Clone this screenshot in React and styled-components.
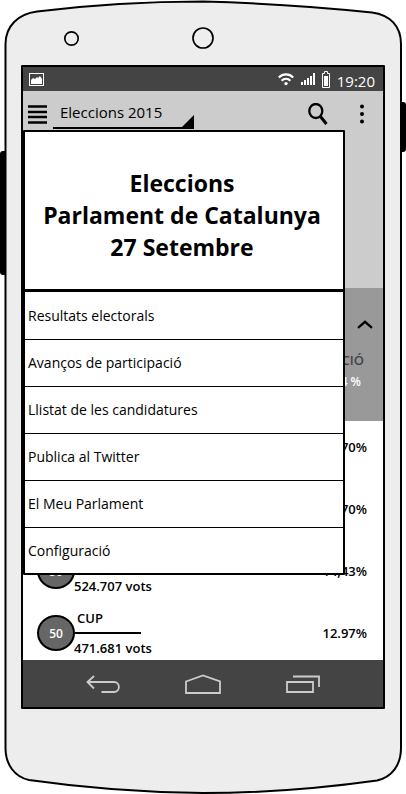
import styled, { createGlobalStyle } from 'styled-components';

const menuItems = [
    'Resultats electorals',
    'Avanços de participació',
    'Llistat de les candidatures',
    'Publica al Twitter',
    'El Meu Parlament',
    'Configuració',
];

const results = [
    { id: 1, percent: '14,70' },
    { id: 2, percent: '14,70' },
    { id: 3, seats: 50, votes: '524.707', percent: '14,43' },
    { id: 4, name: 'CUP', seats: 50, votes: '471.681', percent: '12.97' },
];

const PhoneCase = () => (
    <CaseSvg viewBox="0 0 406 794" preserveAspectRatio="none" aria-hidden="true">
        <rect x="0" y="151" width="10" height="124" rx="3" fill="#000" />
        <rect x="396" y="102" width="10" height="50" rx="3" fill="#000" />
        <path
            d="M5.500 44C5.500 26 18 14 37 11.500C90 5 145 1.500 203 1.500C260 3 320 7 372 12.500C390 15 401 26 401 44V748C401 765 392 777 377 780.500C320 788.500 262 793 203 793C140 792.500 85 788 29 780C15 777 5.500 765 5.500 748Z"
            fill="#ededed"
            stroke="#000"
            strokeWidth="2"
        />
        <circle cx="71.500" cy="38.500" r="6.700" fill="#eee" stroke="#000" strokeWidth="1.700" />
        <circle cx="203" cy="38" r="10" fill="#eee" stroke="#000" strokeWidth="1.700" />
    </CaseSvg>
);

const PictureIcon = () => (
    <svg width="15" height="13" viewBox="0 0 15 13">
        <rect x="0.500" y="0.500" width="14" height="12" fill="none" stroke="#fff" />
        <path d="M2 11V7L4 5L6 6L8 4L9 5L11 3L13 6V11Z" fill="#fff" />
    </svg>
);

const WifiIcon = () => (
    <svg width="16" height="13" viewBox="0 0 16 13" fill="none" stroke="#fff" strokeWidth="2.200">
        <path d="M0.800 4.500C4.800 0.300 11.200 0.300 15.200 4.500" />
        <path d="M3.600 7.700C6.200 5.100 9.800 5.100 12.400 7.700" />
        <circle cx="8" cy="10.600" r="1.700" fill="#fff" stroke="none" />
    </svg>
);

const SignalIcon = () => (
    <svg width="14" height="12" viewBox="0 0 14 12" fill="#fff">
        <rect x="0" y="9" width="2" height="3" />
        <rect x="3" y="7" width="2" height="5" />
        <rect x="6" y="5" width="2" height="7" />
        <rect x="9" y="3" width="2" height="9" />
        <rect x="12" y="0" width="2" height="12" />
    </svg>
);

const BatteryIcon = () => (
    <svg width="8" height="17" viewBox="0 0 8 17">
        <path d="M2.500 2.500V0.500H5.500V2.500H7.500V16.500H0.500V2.500Z" fill="none" stroke="#fff" />
        <rect x="2" y="5" width="4" height="10" fill="#fff" />
    </svg>
);

const MenuIcon = () => (
    <svg width="19" height="19" viewBox="0 0 19 19">
        <path d="M0 1.500H19M0 7H19M0 12H19M0 17.500H19" stroke="#000" strokeWidth="2.400" />
    </svg>
);

const SearchIcon = () => (
    <svg width="20" height="22" viewBox="0 0 20 22" fill="none" stroke="#000">
        <ellipse cx="7.800" cy="8" rx="6.500" ry="7" strokeWidth="2.300" />
        <path d="M12 13L18.500 21" strokeWidth="3" />
    </svg>
);

const MoreIcon = () => (
    <svg width="4" height="20" viewBox="0 0 4 20">
        <circle cx="2" cy="2.500" r="2" />
        <circle cx="2" cy="10" r="2" />
        <circle cx="2" cy="17.500" r="2" />
    </svg>
);

const ChevronUpIcon = () => (
    <svg width="16" height="9" viewBox="0 0 16 9" fill="none" stroke="#000" strokeWidth="2.200">
        <path d="M1 7.800L8 1.800L15 7.800" />
    </svg>
);

const BackIcon = () => (
    <svg width="34" height="20" viewBox="0 0 34 20" fill="none" stroke="#ccc" strokeWidth="1.800">
        <path d="M8 2L1.500 8L8 14.500M1.500 8H28C34.500 8 34.500 18 28 18H15.500" />
    </svg>
);

const HomeIcon = () => (
    <svg width="36" height="20" viewBox="0 0 36 20" fill="none" stroke="#ccc" strokeWidth="1.800">
        <path d="M1 7.500L18 1.500L35 7.500V19H1Z" />
    </svg>
);

const RecentIcon = () => (
    <svg width="34" height="18" viewBox="0 0 34 18" fill="none" stroke="#ccc" strokeWidth="1.800">
        <path d="M1 7H27V17H1ZM7 1.500H33V12" />
    </svg>
);

const Result = ({ name, seats, votes, percent }) => (
    <Row>
        {seats && <Seats>{seats}</Seats>}
        {votes && (
            <Party>
                <Name>{name}</Name>
                <Votes>{votes} vots</Votes>
            </Party>
        )}
        <Percent>{percent}%</Percent>
    </Row>
);

export default function App() {
    return (
        <Phone>
            <GlobalStyle />
            <PhoneCase />
            <Screen>
                <StatusBar>
                    <PictureIcon />
                    <StatusIcons>
                        <WifiIcon />
                        <SignalIcon />
                        <BatteryIcon />
                        <Clock>19:20</Clock>
                    </StatusIcons>
                </StatusBar>
                <AppBar>
                    <MenuButton aria-label="Menú"><MenuIcon /></MenuButton>
                    <Spinner>
                        <SpinnerSelect aria-label="Eleccions" defaultValue="2015">
                            <option value="2015">Eleccions 2015</option>
                        </SpinnerSelect>
                    </Spinner>
                    <Actions>
                        <IconButton aria-label="Cerca"><SearchIcon /></IconButton>
                        <IconButton aria-label="Més opcions"><MoreIcon /></IconButton>
                    </Actions>
                </AppBar>
                <Content>
                    <Chart />
                    <Summary>
                        <IconButton aria-label="Plega"><ChevronUpIcon /></IconButton>
                        <SummaryLabel>PARTICIPACIÓ</SummaryLabel>
                        <SummaryValue>74 %</SummaryValue>
                    </Summary>
                    <Results>
                        {results.map(({ id, ...result }) => <Result key={id} {...result} />)}
                    </Results>
                    <Drawer>
                        <Title>Eleccions<br />Parlament de Catalunya<br />27 Setembre</Title>
                        <Menu>
                            {menuItems.map((item) => (
                                <MenuItem key={item}>
                                    <MenuLink href="#">{item}</MenuLink>
                                </MenuItem>
                            ))}
                        </Menu>
                    </Drawer>
                </Content>
                <NavBar>
                    <NavButton aria-label="Enrere"><BackIcon /></NavButton>
                    <NavButton aria-label="Inici"><HomeIcon /></NavButton>
                    <NavButton aria-label="Recents"><RecentIcon /></NavButton>
                </NavBar>
            </Screen>
        </Phone>
    );
}

const GlobalStyle = createGlobalStyle`
    * {
        box-sizing: border-box;
    }

    body {
        margin: 0;
        background: #fff;
        color: #000;
        font-family: 'Open Sans', 'Noto Sans', sans-serif;
        font-size: 14px;
    }

    svg {
        display: block;
        flex: none;
    }

    button, select {
        font: inherit;
        color: inherit;
    }
`;

const Phone = styled.div`
    position: relative;
    display: flex;
    min-height: 100vh;
    padding: 65px 21px 85px;
`;

const CaseSvg = styled.svg`
    position: absolute;
    inset: 0;
    width: 100%;
    height: 100%;
`;

const Screen = styled.div`
    position: relative;
    display: flex;
    flex: 1;
    flex-direction: column;
    border: 2px solid #000;
    border-radius: 1px;
    background: #fff;
`;

const StatusBar = styled.header`
    display: flex;
    align-items: center;
    justify-content: space-between;
    height: 24px;
    padding: 0 8px 0 6px;
    background: #444;
    color: #fff;
`;

const StatusIcons = styled.div`
    display: flex;
    align-items: center;
    gap: 7px;
`;

const Clock = styled.time`
    font-size: 15px;
    line-height: 20px;
    padding-top: 3px;
`;

const AppBar = styled.div`
    display: flex;
    align-items: center;
    height: 39px;
    padding: 0 19px 0 5px;
    background: #ccc;
`;

const IconButton = styled.button`
    display: block;
    padding: 0;
    border: 0;
    background: none;
    cursor: pointer;
`;

const MenuButton = styled(IconButton)`
    padding-top: 7px;
`;

const Spinner = styled.div`
    position: relative;
    width: 141px;
    height: 37px;
    margin-left: 6px;
    border-bottom: 2px solid #000;

    &::after {
        content: '';
        position: absolute;
        right: 0;
        bottom: 0;
        border-left: 12px solid transparent;
        border-bottom: 12px solid #000;
        pointer-events: none;
    }
`;

const SpinnerSelect = styled.select`
    appearance: none;
    width: 100%;
    height: 40px;
    padding: 0 7px;
    border: 0;
    background: none;
    font-size: 15px;
`;

const Actions = styled.div`
    display: flex;
    align-items: center;
    gap: 32px;
    margin-left: auto;
    padding-top: 7px;
`;

const Content = styled.main`
    position: relative;
    flex: 1;
`;

const Chart = styled.div`
    height: 158px;
    background: #ccc;
`;

const Summary = styled.section`
    display: flex;
    flex-direction: column;
    align-items: flex-end;
    height: 133px;
    padding: 32px 10px 0 0;
    background: #999;
`;

const SummaryLabel = styled.div`
    margin-top: 21px;
    padding-right: 9px;
    color: #444;
    font-size: 13px;
    font-weight: 600;
    line-height: 20px;
`;

const SummaryValue = styled.div`
    padding: 2px 12px 0 0;
    color: #fff;
    font-size: 12px;
    font-weight: 600;
    line-height: 20px;
`;

const Results = styled.ul`
    display: flex;
    flex-direction: column;
    gap: 12px;
    margin: 0;
    padding: 1px 16px 0 14px;
    list-style: none;
`;

const Row = styled.li`
    display: flex;
    align-items: center;
    height: 50px;
    font-size: 13px;
    font-weight: 600;
`;

const Seats = styled.div`
    display: flex;
    align-items: center;
    justify-content: center;
    width: 38px;
    height: 36px;
    border: 2px solid #000;
    border-radius: 50%;
    background: #666;
    color: #fff;
    font-size: 12px;
`;

const Party = styled.div`
    line-height: 22px;
    white-space: nowrap;
`;

const Name = styled.div`
    width: 66px;
    height: 27px;
    padding: 0 2px;
    border-bottom: 2px solid #000;
`;

const Votes = styled.div`
    padding-top: 3px;
    margin-left: -1px;
`;

const Percent = styled.div`
    margin-left: auto;
`;

const Drawer = styled.aside`
    position: absolute;
    top: 0;
    left: 0;
    width: calc(100% - 38px);
    border: 2px solid #000;
    border-radius: 1px;
    background: #fff;
`;

const Title = styled.h1`
    display: flex;
    flex-direction: column;
    justify-content: center;
    height: 160px;
    margin: 0;
    padding: 8px 4px 0 0;
    border-bottom: 3px solid #000;
    font-size: 23px;
    font-weight: 700;
    line-height: 32px;
    text-align: center;
`;

const Menu = styled.ul`
    margin: 0;
    padding: 0;
    list-style: none;
`;

const MenuItem = styled.li`
    height: 47px;

    & + & {
        border-top: 1px solid #000;
    }

    &:last-child {
        height: 46px;
    }
`;

const MenuLink = styled.a`
    display: flex;
    align-items: center;
    height: 100%;
    padding: 0 3px 1px;
    color: #000;
    text-decoration: none;
`;

const NavBar = styled.nav`
    display: flex;
    align-items: center;
    justify-content: center;
    height: 47px;
    background: #444;
`;

const NavButton = styled(IconButton)`
    display: flex;
    justify-content: center;
    width: 100px;
`;
